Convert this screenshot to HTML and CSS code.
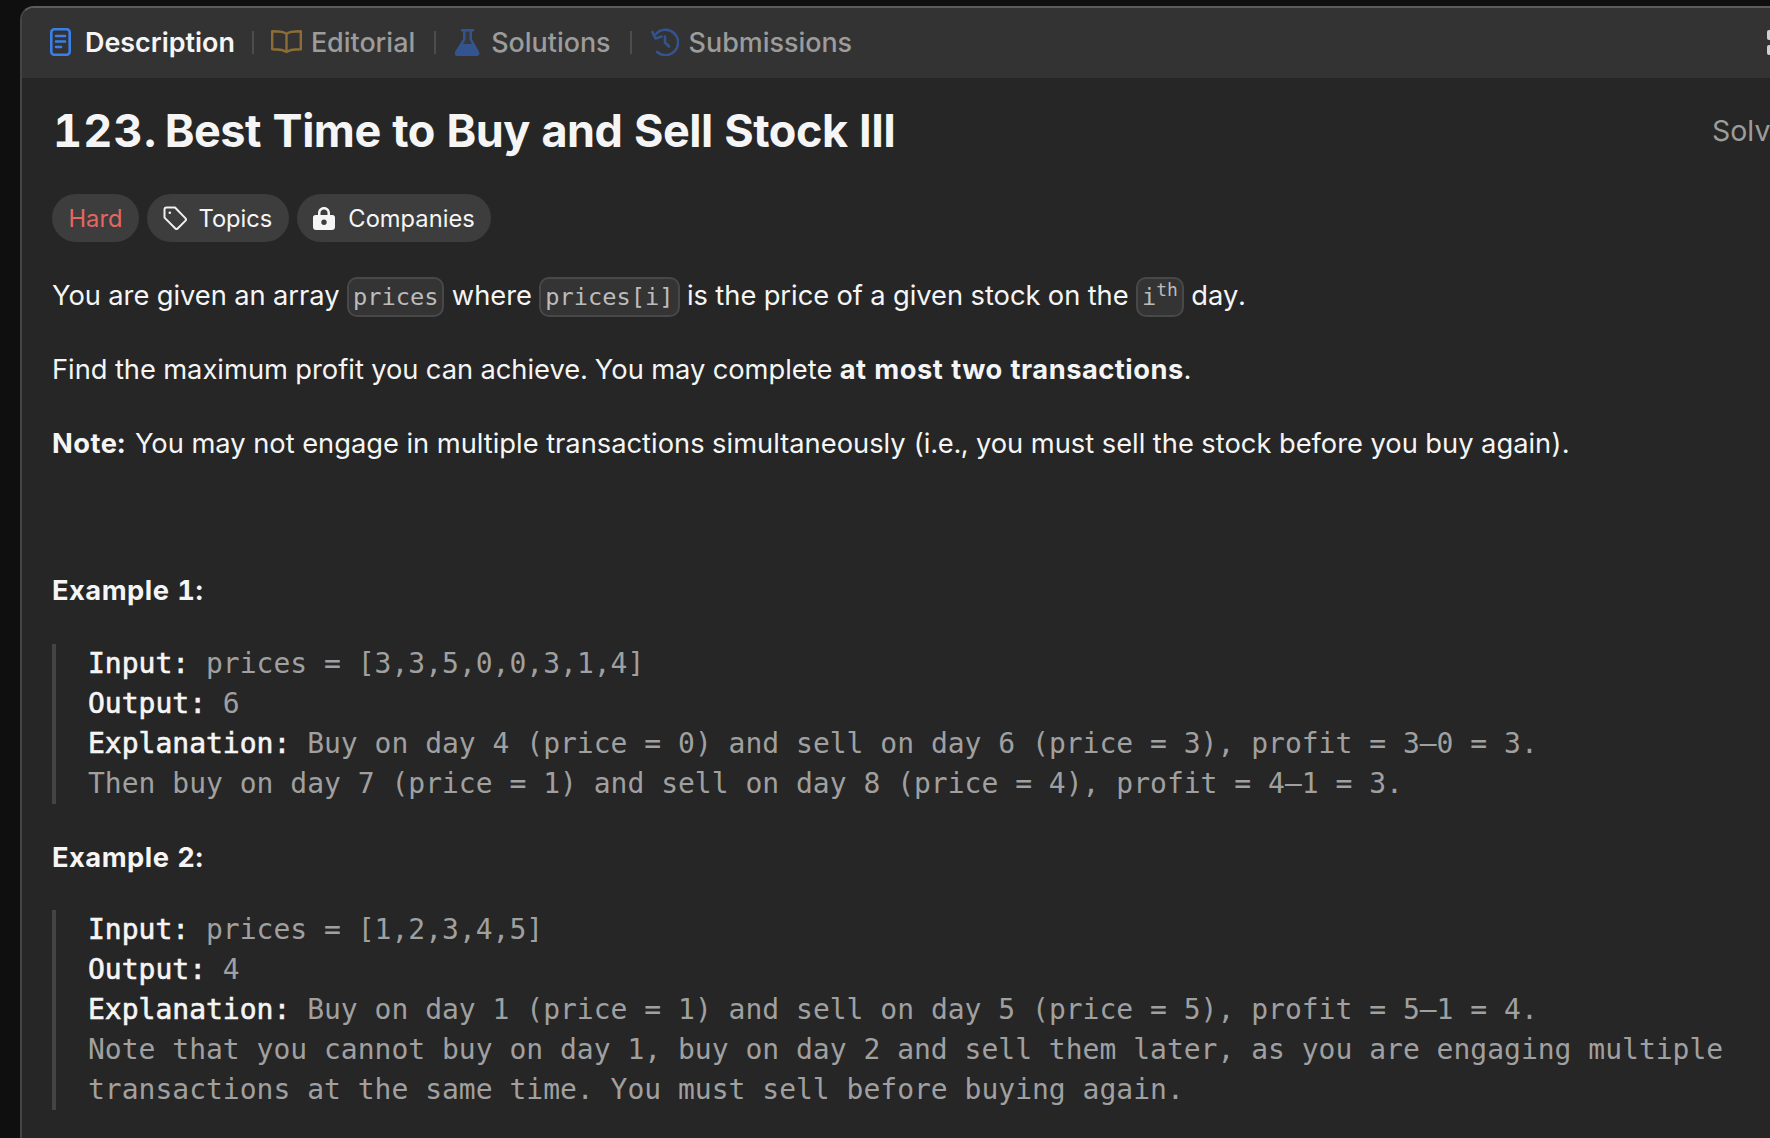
FILE: index.html
```html
<!doctype html>
<html>
    <head>
        <meta name="viewport" content="width=device-width, initial-scale=1">
        <title>123. Best Time to Buy and Sell Stock III</title>
        <link rel="stylesheet" href="styles.css">
    </head>
    <body>
        <div class="panel">
            <div class="tabs">
                <div class="tab active">
                    <svg class="tab-icon" width="21" height="28" viewBox="0 0 21 28" fill="none" stroke="#3b7fe8" stroke-width="2.6" stroke-linecap="round">
                        <rect x="1.3" y="1.3" width="18.4" height="25.4" rx="3"/>
                        <path d="M6 8h9M6 13.500h9M6 19h5"/>
                    </svg>
                    <span>Description</span>
                </div>
                <div class="sep"></div>
                <div class="tab book">
                    <svg class="tab-icon" width="31" height="24" viewBox="0 0 31 24" fill="none" stroke="#8c6d35" stroke-width="2.4" stroke-linejoin="round">
                        <path d="M15.500 4C13.500 1.800 10 1.200 1.200 1.200v18c8 0 10.500.3 12.600 2 .9.8 2.500.8 3.400 0 2.100-1.700 4.600-2 12.600-2v-18c-8.800 0-12.300.6-14.300 2.800zM15.500 4v17"/>
                    </svg>
                    <span>Editorial</span>
                </div>
                <div class="sep"></div>
                <div class="tab flask">
                    <svg class="tab-icon" width="25" height="27" viewBox="0 0 25 27">
                        <path d="M6 0h13v2.500h-2v7.500l7.200 13c1 2-.2 4-2.200 4H2c-2 0-3.200-2-2.200-4L8 10V2.500H6z" fill="#33548f"/>
                        <path d="M10.500 2.500h4v8l2.500 4.500H8l2.500-4.500z" fill="#383838"/>
                    </svg>
                    <span>Solutions</span>
                </div>
                <div class="sep"></div>
                <div class="tab history">
                    <svg class="tab-icon" width="28" height="28" viewBox="0 0 28 28" fill="none" stroke="#33548f" stroke-width="2.600" stroke-linecap="round" stroke-linejoin="round">
                        <path d="M5 6A12.700 12.700 0 1 1 6 24"/>
                        <path d="M1.500 4 4.500 10.500l6-2"/>
                        <path d="M14 8.500v6l4 4"/>
                    </svg>
                    <span>Submissions</span>
                </div>
                <div class="layout-icon">
                    <span></span>
                    <span></span>
                </div>
            </div>
            <div class="content">
                <div class="title-row">
                    <h1 class="title"><span class="num">123.</span> Best Time to Buy and Sell Stock III</h1>
                    <div class="solved">Solved</div>
                </div>
                <div class="pills">
                    <div class="pill hard">Hard</div>
                    <div class="pill">
                        <svg width="24" height="24" viewBox="0 0 24 24" fill="none" stroke="#f0f0f0" stroke-width="2" stroke-linejoin="round">
                            <path d="M1.500 3.500c0-1.200.9-2 2-2h8.500l10.300 10.600c.8.800.8 2 0 2.800l-7.400 7.400c-.8.800-2 .8-2.800 0L1.500 11.600z"/>
                            <circle cx="6.800" cy="6.800" r="1.300" fill="#f0f0f0" stroke="none"/>
                        </svg>
                        <span>Topics</span>
                    </div>
                    <div class="pill companies">
                        <svg width="22" height="23" viewBox="0 0 22 23">
                            <path fill-rule="evenodd" fill="#f5f5f5" d="M11 0c3.400 0 6 2.600 6 6v2h2.500C21 8 22 9 22 10.500V20c0 1.700-1.300 3-3 3H3c-1.700 0-3-1.300-3-3v-9.500C0 9 1 8 2.500 8H5V6c0-3.400 2.600-6 6-6zm0 2.500C9 2.500 7.500 4 7.500 6v2h7V6c0-2-1.500-3.500-3.500-3.500zm0 10a2.700 2.700 0 1 0 0 5.400 2.700 2.700 0 0 0 0-5.400z"/>
                        </svg>
                        <span>Companies</span>
                    </div>
                </div>
                <p class="text">You are given an array <code>prices</code> where <code>prices[i]</code> is the price of a given stock on the <code>i<sup>th</sup></code> day.</p>
                <p class="text">Find the maximum profit you can achieve. You may complete <strong>at most two transactions</strong>.</p>
                <p class="text note"><strong>Note:</strong> You may not engage in multiple transactions simultaneously (i.e., you must sell the stock before you buy again).</p>
                <p class="text example-title"><strong>Example 1:</strong></p>
                <pre class="example"><strong>Input:</strong> prices = [3,3,5,0,0,3,1,4]
<strong>Output:</strong> 6
<strong>Explanation:</strong> Buy on day 4 (price = 0) and sell on day 6 (price = 3), profit = 3–0 = 3.
Then buy on day 7 (price = 1) and sell on day 8 (price = 4), profit = 4–1 = 3.</pre>
                <p class="text second-title"><strong>Example 2:</strong></p>
                <pre class="example second"><strong>Input:</strong> prices = [1,2,3,4,5]
<strong>Output:</strong> 4
<strong>Explanation:</strong> Buy on day 1 (price = 1) and sell on day 5 (price = 5), profit = 5–1 = 4.
Note that you cannot buy on day 1, buy on day 2 and sell them later, as you are engaging multiple
transactions at the same time. You must sell before buying again.</pre>
            </div>
        </div>
    </body>
</html>
```
FILE: styles.css
```css
html, body {
    height: 100%;
    overflow: hidden;
}
body {
    font-family: 'Inter', sans-serif;
    font-variant-numeric: tabular-nums;
    color: #f5f5f5;
    background-color: #0f0f0f;
    margin: 0;
    padding: 6px 0 0 20px;
    box-sizing: border-box;
}
.panel {
    width: 1750px;
    height: 1132px;
    box-sizing: border-box;
    background-color: #262626;
    border-top: 2px solid #5c5c5c;
    border-left: 2px solid #444;
    border-top-left-radius: 14px;
    overflow: hidden;
}
.tabs {
    display: flex;
    align-items: center;
    height: 70px;
    padding: 0 0 2px 28px;
    box-sizing: border-box;
    background-color: #333;
    position: relative;
}
.tab {
    display: flex;
    align-items: center;
    gap: 14px;
    font-size: 26.900px;
    font-weight: 500;
    color: #9c9c9c;
}
.tab.active {
    color: #f5f5f5;
    font-weight: 600;
}
.tab.book {
    gap: 9px;
}
.tab.flask {
    gap: 11px;
}
.tab.history {
    gap: 10px;
}
.sep {
    width: 2px;
    height: 23px;
    margin: 0 19px;
    background-color: #4d4d4d;
}
.tab.active + .sep {
    margin: 0 17px;
}
.layout-icon {
    position: absolute;
    right: -6px;
    top: 22px;
    display: flex;
    flex-direction: column;
    gap: 5px;
}
.layout-icon span {
    width: 9px;
    height: 10px;
    background-color: #d0d0d0;
    border-radius: 2px;
}
.content {
    padding: 0 0 0 30px;
}
.title-row {
    display: flex;
    justify-content: space-between;
    align-items: center;
    height: 106px;
    padding-bottom: 2px;
    box-sizing: border-box;
}
.title {
    margin: 0;
    font-size: 45px;
    font-weight: 700;
    letter-spacing: -0.5px;
    padding-left: 1px;
    white-space: nowrap;
}
.num {
    letter-spacing: 1.2px;
    margin-right: -4px;
}
.solved {
    font-size: 28.500px;
    color: #9c9c9c;
    width: 58px;
    overflow: hidden;
    white-space: nowrap;
}
.pills {
    display: flex;
    gap: 8px;
    margin-top: 10px;
}
.pill {
    display: flex;
    align-items: center;
    gap: 11px;
    height: 48px;
    padding: 0 16.500px;
    border-radius: 24px;
    background-color: #3d3d3d;
    font-size: 23.700px;
}
.pill.companies {
    gap: 13px;
}
.pill.hard {
    color: #e5675f;
}
.text {
    margin: 34px 0 0 0;
    font-size: 27.300px;
    line-height: 40px;
    height: 40px;
    white-space: nowrap;
}
.text strong {
    letter-spacing: 0.5px;
}
.note {
    word-spacing: 0.22px;
}
.note strong {
    margin-right: 2px;
}
.pills + .text {
    margin-top: 34px;
}
.example-title {
    margin-top: 107px;
}
.second-title {
    margin-top: 34px;
}
code {
    display: inline-block;
    box-sizing: border-box;
    height: 40px;
    line-height: 36px;
    padding: 0 4px;
    border: 2px solid #484848;
    border-radius: 10px;
    background-color: #343434;
    color: #bcbcbc;
    font-family: 'DejaVu Sans Mono', monospace;
    font-size: 23.700px;
    vertical-align: middle;
    position: relative;
    top: -1px;
}
sup {
    font-size: 18px;
    line-height: 0;
}
.example {
    margin: 33px 0 0 0;
    padding: 0 0 0 32px;
    border-left: 4px solid #444;
    font-family: 'DejaVu Sans Mono', monospace;
    font-size: 28px;
    line-height: 40px;
    color: #a0a0a0;
    white-space: pre;
}
.example.second {
    margin-top: 32px;
}
.example strong {
    color: #f5f5f5;
    font-weight: 400;
    -webkit-text-stroke: 0.6px #f5f5f5;
}
```
